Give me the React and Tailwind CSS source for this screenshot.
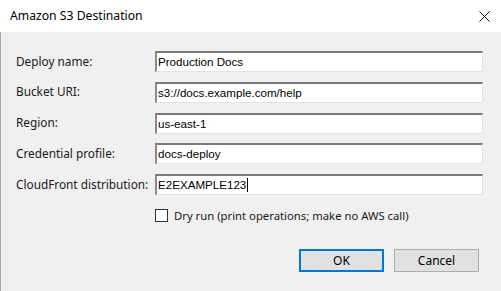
import React from 'react';

const fields = [
  { label: 'Deploy name:', value: 'Production Docs' },
  { label: 'Bucket URI:', value: 's3://docs.example.com/help' },
  { label: 'Region:', value: 'us-east-1' },
  { label: 'Credential profile:', value: 'docs-deploy' },
  { label: 'CloudFront distribution:', value: 'E2EXAMPLE123', caret: true },
];

const App = () => {
  return (
    <div className="w-[501px] h-[291px] flex flex-col bg-[#f0f0f0] overflow-hidden" style={{ fontFamily: '"Noto Sans", "Open Sans", sans-serif' }}>
      <div className="h-[32px] shrink-0 bg-white flex items-center justify-between pl-[10px] pr-[11px]">
        <span className="text-[12.2px] text-black leading-none">Amazon S3 Destination</span>
        <svg width="11" height="11" viewBox="0 0 11 11" className="mt-[1px]">
          <path d="M0.5 0.5 L10.5 10.5 M10.5 0.5 L0.5 10.5" stroke="#111" strokeWidth="1" />
        </svg>
      </div>

      <div className="flex-1 flex flex-col border-l border-[#a8a8a8] pt-[19px] pl-[15px] pr-[18px]">
        <div className="flex flex-col gap-[9.75px]">
          {fields.map((f) => (
            <div key={f.label} className="flex items-center h-[21px]">
              <span className="w-[139px] shrink-0 text-[11.8px] text-[#1a1a1a] leading-none">{f.label}</span>
              <div className="flex-1 h-[21px] bg-white border-t-2 border-l-2 border-r border-b border-t-[#7a7a7a] border-l-[#8a8a8a] border-r-[#e3e3e3] border-b-[#e3e3e3] flex items-center pl-[1px]">
                <span className="text-[11.6px] text-black leading-none" style={{ fontFamily: '"Liberation Sans", Arial, sans-serif' }}>{f.value}</span>
                {f.caret && <span className="w-[1px] h-[14px] bg-black ml-[1px]" />}
              </div>
            </div>
          ))}
        </div>

        <div className="flex items-center mt-[14px] ml-[139px] h-[13px]">
          <div className="w-[13px] h-[13px] bg-white border border-[#333]" />
          <span className="ml-[6px] text-[11.3px] text-[#1a1a1a] leading-none">Dry run (print operations; make no AWS call)</span>
        </div>

        <div className="flex justify-end gap-[10px] mt-[27px] pr-[4px]">
          <button className="w-[85px] h-[23px] bg-[#e1e1e1] border-2 border-[#0078d7] text-[12px] text-black leading-none">OK</button>
          <button className="w-[85px] h-[23px] bg-[#e1e1e1] border border-[#adadad] text-[12px] text-black leading-none">Cancel</button>
        </div>
      </div>
    </div>
  );
};

export default App;
